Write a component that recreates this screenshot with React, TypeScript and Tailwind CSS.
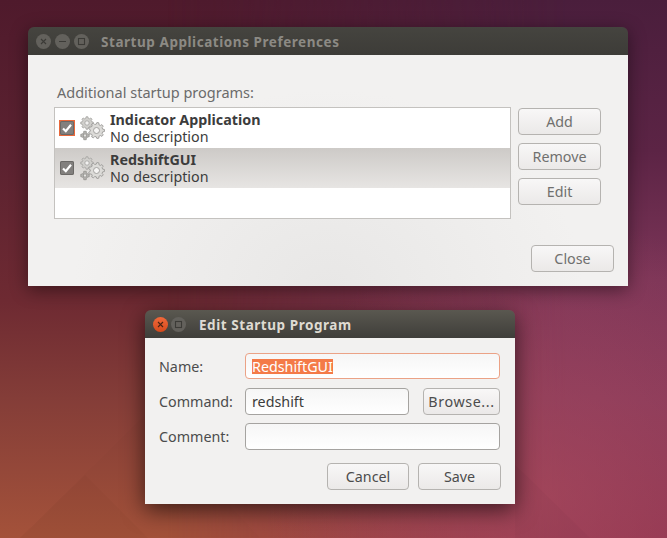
import type { ReactNode } from "react";

const font = "font-['Noto_Sans',sans-serif]";

function gearPath(cx: number, cy: number, outer: number, inner: number, teeth: number) {
  const points: string[] = [];
  const step = (Math.PI * 2) / teeth;
  for (let i = 0; i < teeth; i++) {
    const a = i * step;
    const corners: [number, number][] = [
      [a - step * 0.32, inner],
      [a - step * 0.18, outer],
      [a + step * 0.18, outer],
      [a + step * 0.32, inner],
    ];
    for (const [angle, r] of corners) {
      points.push(`${(cx + Math.cos(angle) * r).toFixed(2)},${(cy + Math.sin(angle) * r).toFixed(2)}`);
    }
  }
  return points.join(" ");
}

function Gears() {
  return (
    <svg width="25" height="25" viewBox="0 0 25 25" className="shrink-0">
      <polygon points={gearPath(7, 7, 6.3, 4.9, 8)} fill="#d0cfcc" stroke="#a3a2a0" strokeWidth="0.8" />
      <circle cx="7" cy="7" r="2.2" fill="#f2f1f0" stroke="#a3a2a0" strokeWidth="0.8" />
      <polygon points={gearPath(16.5, 14.5, 8, 6.3, 9)} fill="#dcdbd8" stroke="#9c9b98" strokeWidth="0.9" />
      <circle cx="16.5" cy="14.5" r="3" fill="#f6f5f4" stroke="#9c9b98" strokeWidth="0.9" />
      <polygon points={gearPath(5, 19.5, 4.4, 3.1, 4)} fill="#b4b3b0" stroke="#8f8e8a" strokeWidth="0.7" />
      <rect x="3.6" y="18.1" width="2.8" height="2.8" fill="#e6e5e3" stroke="#8f8e8a" strokeWidth="0.6" />
    </svg>
  );
}

function Check({ focused }: { focused?: boolean }) {
  return (
    <div className={`flex h-[16px] w-[16px] shrink-0 items-center justify-center ${focused ? "bg-[#e9683a]" : ""}`}>
      <div className="flex h-[14px] w-[14px] items-center justify-center rounded-[2px] bg-[#82807e] shadow-[inset_0_0_0_1px_#6a6866]">
        <svg width="12" height="12" viewBox="0 0 12 12">
          <path d="M2 6.5 L4.8 9.2 L10 2.8" fill="none" stroke="#ffffff" strokeWidth="2.2" />
        </svg>
      </div>
    </div>
  );
}

function Row({ name, selected, focused }: { name: string; selected?: boolean; focused?: boolean }) {
  return (
    <div
      className={`flex h-[40px] items-center pl-[4px] ${
        selected ? "bg-[linear-gradient(#cdcac7,#e7e5e3)]" : ""
      }`}
    >
      <Check focused={focused} />
      <div className="ml-[5px]">
        <Gears />
      </div>
      <div className="ml-[5px] flex flex-col text-[14.3px] leading-[17px] text-[#3c3c3c]">
        <span className="font-bold">{name}</span>
        <span>No description</span>
      </div>
    </div>
  );
}

function Btn({ children, className = "" }: { children: ReactNode; className?: string }) {
  return (
    <div
      className={`flex h-[27px] items-center justify-center rounded-[4px] border border-[#b5b3b0] bg-[linear-gradient(#f8f7f7,#ebe9e8)] text-[14.3px] text-[#4c4c4c] ${className}`}
    >
      {children}
    </div>
  );
}

function Field({ children, className = "" }: { children?: ReactNode; className?: string }) {
  return (
    <div
      className={`flex items-center rounded-[4px] border bg-[linear-gradient(#f6f6f6,#ffffff)] pl-[6px] text-[14.3px] text-[#3c3c3c] ${className}`}
    >
      {children}
    </div>
  );
}

function WinBtn({ children, close }: { children: ReactNode; close?: boolean }) {
  return (
    <div
      className={`flex h-[15px] w-[15px] items-center justify-center rounded-full ${
        close ? "bg-[linear-gradient(#f0683a,#d64a1c)]" : "bg-[#63615c]"
      }`}
    >
      <svg width="9" height="9" viewBox="0 0 9 9" fill="none" stroke={close ? "#4a2414" : "#3c3b37"} strokeWidth="1.1">
        {children}
      </svg>
    </div>
  );
}

const closeMark = <path d="M2 2 L7 7 M7 2 L2 7" />;
const minMark = <path d="M1 4.5 H8" />;
const maxMark = <rect x="1.5" y="1.5" width="6" height="6" />;

function Wallpaper() {
  return (
    <>
      <div className="absolute inset-0 bg-[linear-gradient(#4f1a2c_0%,#5c2230_30%,#6e2a32_56%,#843d38_74%,#a4523a_100%)]" />
      <div className="absolute inset-0 bg-[linear-gradient(#4a1e3c_0%,#5c2445_28%,#7c3558_52%,#86385a_74%,#8e3350_100%)] [mask-image:linear-gradient(to_right,transparent_25%,black_85%)]" />
      <div className="absolute inset-0 bg-[radial-gradient(circle_at_82%_92%,rgba(176,80,96,0.55)_0%,rgba(176,80,96,0)_38%)]" />
      <svg width="667" height="538" viewBox="0 0 667 538" className="absolute inset-0">
        <polygon points="20,538 145,415 260,538" fill="#000000" fillOpacity="0.012" />
        <polygon points="20,538 85,475 148,538" fill="#000000" fillOpacity="0.02" />
        <polygon points="528,477 590,538 515,538 515,465" fill="#000000" fillOpacity="0.02" />
      </svg>
    </>
  );
}

export default function App() {
  return (
    <div className={`relative h-[538px] w-[667px] overflow-hidden ${font}`}>
      <Wallpaper />

      {/* preferences window */}
      <div className="absolute left-[28px] top-[27px] flex h-[259px] w-[600px] flex-col overflow-hidden rounded-t-[6px] shadow-[0_4px_18px_rgba(0,0,0,0.45)]">
        <div className="flex h-[28px] shrink-0 items-center bg-[linear-gradient(#45443f,#3d3c38)] pl-[8px]">
          <div className="flex gap-[4px]">
            <WinBtn>{closeMark}</WinBtn>
            <WinBtn>{minMark}</WinBtn>
            <WinBtn>{maxMark}</WinBtn>
          </div>
          <span className="ml-[12px] pt-[2px] text-[13.5px] font-bold tracking-[0.55px] text-[#8c8a84]">
            Startup Applications Preferences
          </span>
        </div>
        <div className="flex flex-1 flex-col bg-[#f2f1f0] bg-[radial-gradient(ellipse_at_50%_100%,#e8e7e6_0%,#f2f1f0_60%)] pl-[26px] pt-[27px]">
          <div className="ml-[3px] h-[20px] text-[14.5px] leading-[20px] text-[#6b6b6b]">
            Additional startup programs:
          </div>
          <div className="mt-[5px] flex">
            <div className="h-[112px] w-[457px] border border-[#c4c2bf] bg-white">
              <Row name="Indicator Application" focused />
              <Row name="RedshiftGUI" selected />
            </div>
            <div className="ml-[7px] mt-[1px] flex w-[83px] flex-col gap-[8px]">
              <Btn className="text-[#70706e]">Add</Btn>
              <Btn className="text-[#70706e]">Remove</Btn>
              <Btn className="text-[#70706e]">Edit</Btn>
            </div>
          </div>
          <div className="mt-[26px] flex justify-end pr-[14px]">
            <Btn className="w-[83px] text-[#70706e]">Close</Btn>
          </div>
        </div>
      </div>

      {/* edit dialog */}
      <div className="absolute left-[145px] top-[310px] flex h-[194px] w-[370px] flex-col overflow-hidden rounded-t-[6px] shadow-[0_6px_22px_rgba(0,0,0,0.6)]">
        <div className="flex h-[28px] shrink-0 items-center bg-[linear-gradient(#5a5850,#3f3e3a)] pl-[8px]">
          <div className="flex gap-[3px]">
            <WinBtn close>{closeMark}</WinBtn>
            <WinBtn>{maxMark}</WinBtn>
          </div>
          <span className="ml-[13px] pt-[2px] text-[13.5px] font-bold tracking-[0.55px] text-[#dfdbd2]">
            Edit Startup Program
          </span>
        </div>
        <div className="flex flex-1 flex-col bg-[#f2f1f0] pl-[14px] pr-[15px] pt-[15px] text-[14.3px] text-[#4c4c4c]">
          <div className="flex h-[26px] items-center">
            <span className="w-[86px] pt-[1px]">Name:</span>
            <Field className="h-[26px] flex-1 border-[#eba286]">
              <span className="bg-[#f47a48] leading-[15px] text-white">RedshiftGUI</span>
            </Field>
          </div>
          <div className="mt-[9px] flex h-[27px] items-center">
            <span className="w-[86px]">Command:</span>
            <Field className="h-[27px] w-[164px] border-[#a5a3a0]">redshift</Field>
            <Btn className="ml-[14px] flex-1 tracking-[0.6px]">Browse...</Btn>
          </div>
          <div className="mt-[8px] flex h-[27px] items-center">
            <span className="w-[86px]">Comment:</span>
            <Field className="h-[27px] flex-1 border-[#a5a3a0]" />
          </div>
          <div className="-mr-[1px] mt-[13px] flex justify-end gap-[9px]">
            <Btn className="w-[82px]">Cancel</Btn>
            <Btn className="w-[83px]">Save</Btn>
          </div>
        </div>
      </div>
    </div>
  );
}
